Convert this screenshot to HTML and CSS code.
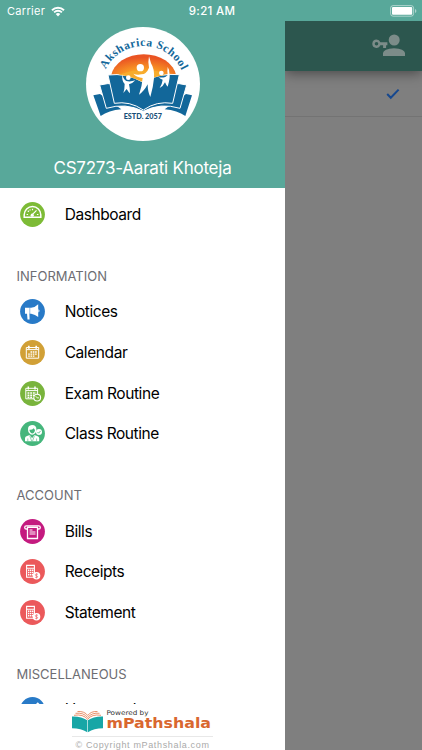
FILE: index.html
```html
<!DOCTYPE html>
<html lang="en">
<head>
  <meta charset="UTF-8">
  <meta name="viewport" content="width=device-width, initial-scale=1.0">
  <title>mPathshala</title>
  <link rel="stylesheet" href="styles.css">
</head>
<body>

<div class="status-bar">
  <div class="carrier">
    <span>Carrier</span>
    <svg class="wifi" viewBox="0 0 14 11">
      <path d="M1 4.2a8.6 8.6 0 0 1 12 0M3.1 6.4a5.6 5.6 0 0 1 7.8 0" fill="none" stroke="#fff" stroke-width="1.9"/>
      <path d="M7 10.4 4.7 8.1a3.3 3.3 0 0 1 4.6 0z" fill="#fff"/>
    </svg>
  </div>
  <div class="time">9:21 AM</div>
  <div class="power">
    <svg class="battery" viewBox="0 0 27 12">
      <rect x=".6" y=".6" width="23" height="10.6" rx="2.5" fill="none" stroke="#fff" stroke-opacity=".5"/>
      <rect x="2" y="2" width="20.2" height="7.8" rx="1" fill="#fff"/>
      <path d="M25 4v4q1.4-.7 1.4-2T25 4z" fill="#fff" fill-opacity=".5"/>
    </svg>
  </div>
</div>

<div class="app">
  <div class="drawer">
    <div class="profile">
      <svg class="school-logo" viewBox="18 21 342 342">
        <defs>
          <radialGradient id="sun" cx="50%" cy="80%" r="70%">
            <stop offset="0" stop-color="#fff04a"/>
            <stop offset=".4" stop-color="#fba424"/>
            <stop offset="1" stop-color="#ea5423"/>
          </radialGradient>
          <path id="arc" d="M77 148A126 126 0 0 1 307 157"/>
        </defs>
        <circle cx="189" cy="192" r="171" fill="#fff"/>
        <path d="M93 167a99 75 0 0 1 196 0l-40 30H130z" fill="url(#sun)"/>
        <g fill="#12679a">
          <path d="M60 222 40 226l22 62q24-17 62-20z"/>
          <path d="M318 222 336 226l-20 62q-24-17-62-20z"/>
          <g stroke="#fff" stroke-width="3">
            <path d="M82 191 59 195l20 70q58-18 111 9 52-27 110-9l20-70-22-4z"/>
            <path d="M84 165q55-7 104 21 50-28 110-22l-20 86q-48-8-88 20-41-28-87-20z"/>
          </g>
        </g>
        <path d="M115 164q38 4 73 22 35-17 66-21l-23-12-73-1z" fill="#f7ac2d"/>
        <g fill="#fff">
          <circle cx="181" cy="143" r="11"/>
          <path d="M207 109q-4 19 0 34-7 19-23 20-13 3-24-2 10 11 28 13-2 26-11 50 15-10 26-31 0 23 8 38 9-31 11-56 2-28-9-45z"/>
          <circle cx="145" cy="173" r="7"/>
          <path d="M127 163q-2 22 7 29 0 16-4 27l10-12q6 10 10 13 0-16-3-27 10-2 19-12-15 5-27 2-9-4-12-20z"/>
          <circle cx="244" cy="159" r="7"/>
          <path d="M263 141q-2 14 0 24-7 10-27 7 5 5 12 7-2 15-9 25 10-4 16-17 4 10 8 13 9-30 5-42 0-9-5-17z"/>
        </g>
        <text class="school-name" textLength="284" lengthAdjust="spacing"><textPath href="#arc">Aksharica School</textPath></text>
        <text class="school-estd" x="131" y="296" textLength="115" lengthAdjust="spacingAndGlyphs">ESTD. 2057</text>
      </svg>
      <div class="user-name">CS7273-Aarati Khoteja</div>
    </div>

    <div class="menu">
      <div class="menu-item">
        <svg class="icon" viewBox="0 0 25 25">
          <circle cx="12.5" cy="12.5" r="12.4" fill="#7dbb36"/>
          <path d="M4.2 15.2v-2.4a8.3 8.3 0 0 1 16.6 0v2.4z" fill="none" stroke="#fff" stroke-width="1.5"/>
          <path d="M6.6 12.5h1.5M7.8 8.8l1.1 1M12.5 6.7v1.6M18.4 12.5h-1.5M11.8 13.2l4.7-4.9M9.8 7.5l.5 1" stroke="#fff" stroke-width="1.2"/>
          <circle cx="12.2" cy="13.2" r="1.6" fill="#fff"/>
        </svg>
        <span>Dashboard</span>
      </div>

      <div class="menu-title">INFORMATION</div>
      <div class="menu-item">
        <svg class="icon" viewBox="0 0 25 25">
          <circle cx="12.5" cy="12.5" r="12.4" fill="#287ac7"/>
          <path d="M5 8.8h6.2q4-.4 7-3.500v12.800q-3-2.800-7-3.400H5zM18.500 10.200q2 1.600 0 3.200zM7 14.500h2.400l.2 6H7.500z" fill="#fff"/>
          <path d="M9.800 8.500v6.500" stroke="#287ac7" stroke-width=".5"/>
        </svg>
        <span>Notices</span>
      </div>
      <div class="menu-item">
        <svg class="icon" viewBox="0 0 25 25">
          <circle cx="12.5" cy="12.5" r="12.4" fill="#d1a036"/>
          <path d="M6.3 7.5h12.4v10.7H6.3zM6.5 9.6h12" fill="none" stroke="#fff" stroke-width="1"/>
          <path d="M8.8 5.7v3M16.2 5.7v3" stroke="#fff" stroke-width="1.7"/>
          <path d="M10.5 12h6.6M8.2 14.1h8.9M8.2 16.2h6.6" stroke="#fff" stroke-width="1.3" stroke-dasharray="1.6 .7"/>
        </svg>
        <span>Calendar</span>
      </div>
      <div class="menu-item">
        <svg class="icon" viewBox="0 0 25 25">
          <circle cx="12.5" cy="12.5" r="12.4" fill="#79b43c"/>
          <path d="M5.8 7.3h11.8v10.5H5.8zM6 9.6h11.5" fill="none" stroke="#fff" stroke-width="1"/>
          <path d="M8.3 5.4v3M15 5.4v3" stroke="#fff" stroke-width="1.5"/>
          <path d="M7.5 12h8.7M7.5 14.2h7M7.5 16.3h5" stroke="#fff" stroke-width="1.4" stroke-dasharray="1.9 .8"/>
          <circle cx="17.2" cy="16.6" r="3.4" fill="#79b43c" stroke="#fff" stroke-width="1.1"/>
          <path d="m15.7 15.2 1.6 1.7h1.6" fill="none" stroke="#fff" stroke-width=".9"/>
        </svg>
        <span>Exam Routine</span>
      </div>
      <div class="menu-item">
        <svg class="icon" viewBox="0 0 25 25">
          <circle cx="12.5" cy="12.5" r="12.4" fill="#45b67c"/>
          <path d="M8 8.8q-.3-4.7 4-4.9 4.7 0 4.4 4.9-.4 4.6-4.3 5Q8.3 13 8 8.8z" fill="#fff"/>
          <path d="M9.4 8.8q3 .2 4.300-1.500l1.300 1.600q-.5 3.300-2.900 3.500-2.200-.3-2.700-3.600z" fill="#45b67c"/>
          <path d="M5 20.300v-3.300q.2-1.600 2-2.100l2.800-.9 2.300 3.300 2.300-3.300 2.800.9q1.800.5 2 2.100v3.300z" fill="#fff"/>
          <path d="m9.700 14.600 2 5.600M14.500 14.600l-2 5.600M7.800 17.500v2.800M16.600 17.500v2.800" stroke="#45b67c" stroke-width=".6"/>
          <circle cx="19" cy="11" r="3" fill="#fff"/>
          <path d="m17.500 11 1.100 1.200 2-2.300" fill="none" stroke="#45b67c" stroke-width=".8"/>
        </svg>
        <span>Class Routine</span>
      </div>

      <div class="menu-title">ACCOUNT</div>
      <div class="menu-item">
        <svg class="icon" viewBox="0 0 25 25">
          <circle cx="12.5" cy="12.5" r="12.4" fill="#c41a7f"/>
          <path d="M7.5 10H6.300a1.600 1.600 0 0 1 0-3.200h12.400a1.600 1.600 0 0 1 0 3.200h-1.200M7.500 8.300h10v11.200h-10z" fill="none" stroke="#fff" stroke-width="1.3"/>
          <path d="M9.500 11h3M9.500 13h6M9.500 15h6" stroke="#fff" stroke-width="1"/>
        </svg>
        <span>Bills</span>
      </div>
      <div class="menu-item">
        <svg class="icon" viewBox="0 0 25 25">
          <circle cx="12.5" cy="12.5" r="12.4" fill="#eb595b"/>
          <path d="M6.600 6.400h7.800v11.800H6.600zM6.600 9.300h7.800" fill="none" stroke="#fff" stroke-width="1.1"/>
          <path d="M8 11.200h5.500M8 13.500h5.500M8 15.800h5.500" stroke="#fff" stroke-width="1.4" stroke-dasharray="1.4 .6"/>
          <circle cx="16.500" cy="16.800" r="3.800" fill="#fff"/>
          <path d="M18 15.300q-2.600-1-2.800.4 0 .9 1.300 1.100 1.500.3 1.300 1.200-.5 1.200-2.800.2M16.500 14.300v5" fill="none" stroke="#eb595b" stroke-width=".6"/>
        </svg>
        <span>Receipts</span>
      </div>
      <div class="menu-item">
        <svg class="icon" viewBox="0 0 25 25">
          <circle cx="12.5" cy="12.5" r="12.4" fill="#eb595b"/>
          <path d="M6.600 6.400h7.800v11.800H6.600zM6.600 9.300h7.800" fill="none" stroke="#fff" stroke-width="1.1"/>
          <path d="M8 11.200h5.500M8 13.500h5.500M8 15.800h5.500" stroke="#fff" stroke-width="1.4" stroke-dasharray="1.4 .6"/>
          <circle cx="16.500" cy="16.800" r="3.800" fill="#fff"/>
          <path d="M18 15.300q-2.600-1-2.800.4 0 .9 1.300 1.100 1.500.3 1.300 1.200-.5 1.200-2.800.2M16.500 14.300v5" fill="none" stroke="#eb595b" stroke-width=".6"/>
        </svg>
        <span>Statement</span>
      </div>

      <div class="menu-title">MISCELLANEOUS</div>
      <div class="menu-item">
        <svg class="icon" viewBox="0 0 25 25">
          <circle cx="12.5" cy="12.5" r="12.4" fill="#287ac7"/>
          <path d="m16 7 1.800-1.700 1.700 1.700-8.500 9-3 1z" fill="#fff"/>
        </svg>
        <span>Homework</span>
      </div>
    </div>

    <div class="footer">
      <svg class="brand" viewBox="0 0 142 27">
        <g fill="none" stroke="#e27545" stroke-width=".8">
          <path d="M2 6.300q9-1.500 13.700 4Q20 4.800 29 6.300M3.500 4.300q8-1 12.200 4.200Q20 3.300 27.500 4.300M5.500 2.500q7-.5 10.200 4Q19 2 25.500 2.500"/>
        </g>
        <path d="M0 7.400q9.500-.3 15.300 3.900v12Q9 19.300 0 19.300z" fill="#17a6a6"/>
        <path d="M31 7.400q-9.500-.3-15.100 3.900v12q6-4 15.100-4z" fill="#17a6a6"/>
        <text class="powered" x="34.500" y="5.600" textLength="42" lengthAdjust="spacingAndGlyphs">Powered by</text>
        <text class="brand-name" x="34.500" y="18.500" textLength="104.500" lengthAdjust="spacingAndGlyphs">mPathshala</text>
      </svg>
      <div class="copyright">© Copyright mPathshala.com</div>
    </div>
  </div>

  <div class="page">
    <div class="page-header">
      <svg class="switch-user" viewBox="0 0 33 23">
        <circle cx="22.200" cy="6" r="5.500"/>
        <path d="M11 22v-3q.5-4 11-4.700 10.500.7 11 4.700v3z"/>
        <path fill-rule="evenodd" d="M4.500 5.500a4.200 4.200 0 0 1 3.900 2.800h7v3h-1.300v2.600h-3v-2.600H8.400a4.200 4.200 0 1 1-3.900-5.800zm0 2.500a1.800 1.800 0 1 0 0 3.600 1.800 1.800 0 0 0 0-3.600z"/>
      </svg>
    </div>
    <div class="page-row">
      <svg class="check" viewBox="0 0 14 12"><path d="m1.200 6 3.600 3.700 7.800-8.100" fill="none" stroke="#16488f" stroke-width="2"/></svg>
    </div>
  </div>
</div>

</body>
</html>
```

FILE: styles.css
```css
* {
  box-sizing: border-box;
}
body {
  margin: 0;
  height: 750px;
  display: flex;
  flex-direction: column;
  overflow: hidden;
  background-color: #7f7f7f;
  font-family: Inter, Roboto, sans-serif;
}
svg {
  display: block;
  flex-shrink: 0;
}
.status-bar {
  height: 21px;
  flex-shrink: 0;
  display: grid;
  grid-template-columns: 1fr auto 1fr;
  align-items: center;
  padding: 1px 5px 0 7px;
  background-color: #58a89a;
  color: #fff;
  font-size: 11px;
}
.carrier {
  display: flex;
  align-items: center;
  gap: 6px;
  letter-spacing: 0.3px;
}
.wifi {
  width: 14px;
  height: 11px;
}
.time {
  font-size: 11.5px;
  font-weight: 500;
  letter-spacing: 0.3px;
}
.power {
  display: flex;
  justify-content: flex-end;
}
.battery {
  width: 27px;
  height: 12px;
}
.app {
  flex: 1;
  min-height: 0;
  display: flex;
}
.drawer {
  width: 285px;
  display: flex;
  flex-direction: column;
  background-color: #fff;
}
.profile {
  height: 167px;
  flex-shrink: 0;
  padding-top: 6px;
  display: flex;
  flex-direction: column;
  align-items: center;
  background-color: #58a89a;
}
.school-logo {
  width: 114px;
  height: 114px;
}
.school-name {
  font-family: "Liberation Serif", serif;
  font-size: 35px;
  font-weight: bold;
  fill: #12679a;
}
.school-estd {
  font-family: Lato, sans-serif;
  font-size: 23px;
  font-weight: 900;
  fill: #174f78;
}
.user-name {
  margin-top: 16px;
  font-size: 17px;
  line-height: 22px;
  letter-spacing: -0.22px;
  color: #fff;
}
.menu {
  flex: 1;
  min-height: 0;
  overflow: hidden;
  padding-top: 6px;
}
.menu-item {
  height: 40.8px;
  padding-left: 20.4px;
  display: flex;
  align-items: center;
  gap: 19.3px;
  font-size: 15.5px;
  letter-spacing: -0.42px;
  color: #000;
}
.icon {
  width: 25px;
  height: 25px;
}
.menu-title {
  height: 56.4px;
  padding: 31px 0 0 16.5px;
  font-size: 13px;
  line-height: 20px;
  color: #6d6d72;
}
.footer {
  height: 46px;
  flex-shrink: 0;
  padding-top: 5px;
  display: flex;
  flex-direction: column;
  align-items: center;
  background-color: #fff;
}
.brand {
  width: 142px;
  height: 27px;
}
.powered {
  font-family: "DejaVu Sans", sans-serif;
  font-size: 6.5px;
  fill: #333;
}
.brand-name {
  font-family: "DejaVu Sans", sans-serif;
  font-size: 13.5px;
  font-weight: bold;
  fill: #d9672f;
}
.copyright {
  width: 141px;
  border-top: 1px solid #e8e8e8;
  text-align: center;
  font-family: "Liberation Sans", sans-serif;
  font-size: 9px;
  line-height: 17px;
  letter-spacing: 0.65px;
  white-space: nowrap;
  color: #aaa;
}
.page {
  flex: 1;
  display: flex;
  flex-direction: column;
  overflow: hidden;
}
.page-header {
  height: 50px;
  display: flex;
  justify-content: flex-end;
  padding: 13px 17px 0 0;
  background-color: #2c564e;
  box-shadow: 0 2px 12px rgba(0, 0, 0, 0.45);
}
.switch-user {
  width: 33px;
  height: 23px;
  fill: #7c8c89;
}
.page-row {
  height: 46px;
  display: flex;
  align-items: center;
  justify-content: flex-end;
  padding-right: 22px;
  border-bottom: 1px solid #737373;
}
.check {
  width: 14px;
  height: 12px;
}
```
